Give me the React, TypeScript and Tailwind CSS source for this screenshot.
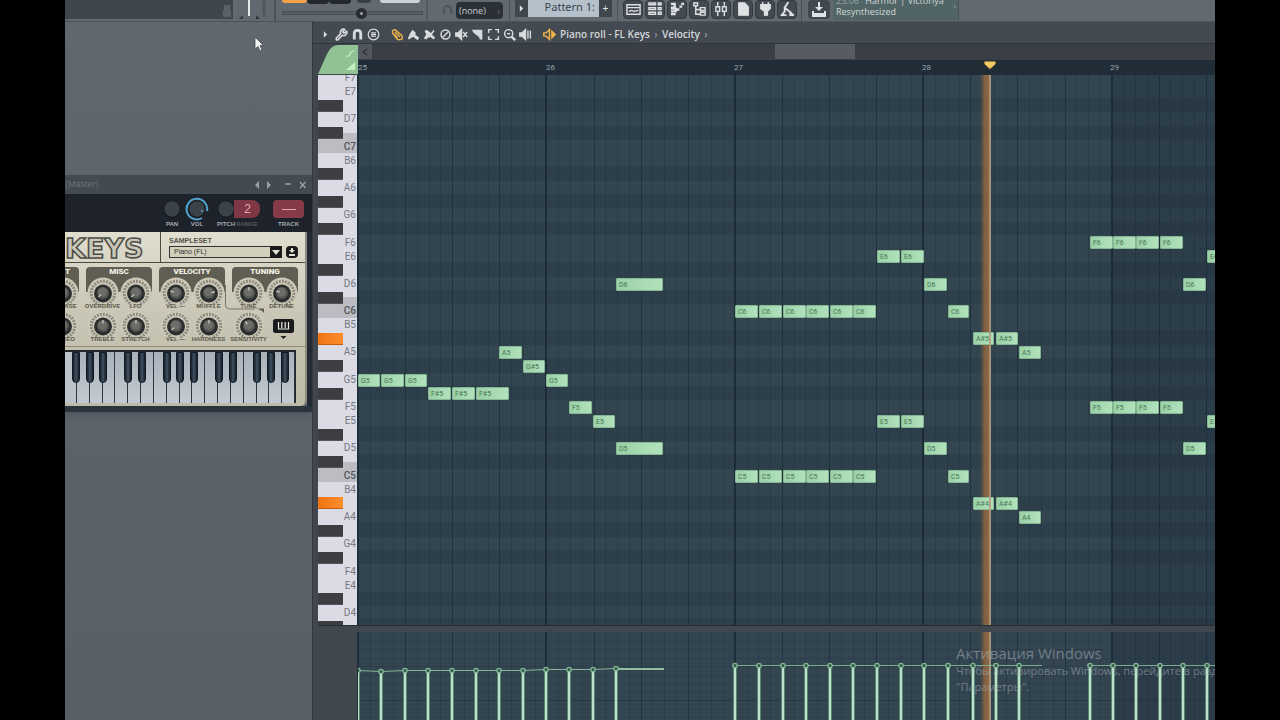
import React from "react";
import { Wrench } from "lucide-react";

const NAMES = ["C", "C#", "D", "D#", "E", "F", "F#", "G", "G#", "A", "A#", "B"];
const TOP_KEY = 7 * 12 + 5;
const ROWS = Array.from({ length: 41 }, (_, i) => {
  const n = TOP_KEY - i;
  return { name: NAMES[n % 12] + Math.floor(n / 12), black: NAMES[n % 12].length > 1, c: n % 12 === 0 };
});
const HELD = ["A#5", "A#4"];
const BAR = 188.4;
const ROW = 562 / 41;
const BARS = [25, 26, 27, 28, 29];

type Note = [string, number, number];
const NOTES: Note[] = [
  ["G5", 0, 23], ["G5", 23, 24], ["G5", 47, 23],
  ["F#5", 70, 24], ["F#5", 94, 24], ["F#5", 118, 34],
  ["A5", 141, 24], ["G#5", 165, 23], ["G5", 188, 23], ["F5", 211, 24], ["E5", 235, 23],
  ["D6", 258, 48], ["D5", 258, 48],
  ...["C6", "C5"].flatMap((n) => [377, 401, 425, 448, 472, 495].map((x): Note => [n, x, 24])),
  ...["E6", "E5"].flatMap((n) => [519, 543].map((x): Note => [n, x, 24])),
  ["D6", 566, 24], ["D5", 566, 24], ["C6", 590, 22], ["C5", 590, 22],
  ["A#5", 615, 22], ["A#5", 638, 23], ["A5", 661, 23],
  ["A#4", 615, 22], ["A#4", 638, 23], ["A4", 661, 23],
  ...["F6", "F5"].flatMap((n) => [732, 755, 778, 802].map((x): Note => [n, x, 24])),
  ["D6", 825, 24], ["D5", 825, 24], ["E6", 849, 24], ["E5", 849, 24],
];
const VELOCITY: [number, number][] = [
  [0, 39], [23, 40], [47, 39], [70, 39], [94, 39], [118, 39], [141, 39], [165, 39], [188, 38], [211, 38], [235, 38], [258, 37],
  ...[377, 401, 425, 448, 472, 495, 519, 543, 566, 590, 615, 638, 661, 732, 755, 778, 802, 825, 849].map((x): [number, number] => [x, 34]),
];

function GridLines() {
  return (
    <svg className="absolute inset-0 h-full w-full" shapeRendering="crispEdges" aria-hidden="true">
      {Array.from({ length: 120 }, (_, i) => {
        const x = Math.round((i * BAR) / 16);
        if (i % 16 === 0) return <rect key={i} x={x - 1} width="2" height="100%" fill="#172630" opacity=".75" />;
        if (i % 4 === 0) return <rect key={i} x={x} width="1" height="100%" fill="#1d2e39" opacity=".8" />;
        return <rect key={i} x={x} width="1" height="100%" fill="#22333e" opacity=".5" />;
      })}
      <rect x={Math.round(BAR * 4)} width="100%" height="100%" fill="#14202c" opacity=".2" />
    </svg>
  );
}

function PlayGlow() {
  return <div className="absolute inset-y-0 left-[622px] w-[9px] bg-linear-to-r from-[#a36c3c]/0 via-[#95663d]/80 to-[#8a6848]" />;
}

function PlayLine() {
  return <div className="absolute inset-y-0 left-[631px] w-[2px] bg-[#b59b7c]/90" />;
}

function Knob({ angle = 0 }: { angle?: number }) {
  return (
    <svg viewBox="0 0 32 32" className="h-8 w-8 shrink-0" aria-hidden="true">
      <circle cx="16" cy="16" r="15.5" fill="#cbc8b7" />
      <circle cx="16" cy="16" r="11.800" fill="none" stroke="#8b897c" strokeWidth="3" strokeDasharray="1.500 1" pathLength="60" />
      <path d="M16 16 10 31h12z" fill="#c6c3b1" />
      <circle cx="16" cy="16.5" r="9" fill="#2b2e2f" />
      <circle cx="16" cy="16" r="6" fill="#565754" />
      <circle cx="15.500" cy="15" r="4.5" fill="#6c6c68" />
      <path d="M16 13.500V10" stroke="#d0cfc6" strokeWidth="1.200" transform={`rotate(${angle} 16 16)`} />
    </svg>
  );
}

function KnobGroup({ title, titleClass, top, bottom, angles, last }: { title: string; titleClass: string; top: string[]; bottom: string[]; angles: number[]; last?: boolean }) {
  const label = "h-[5px] whitespace-nowrap text-[6px] leading-[5px] font-bold text-[#5a574b]";
  return (
    <div className="relative w-[66px] shrink-0">
      <div className={`h-[25px] rounded-t-sm bg-[#605e52] pt-px font-['Roboto'] text-[8px] leading-[8px] font-black text-[#f1efe2] ${titleClass}`}>{title}</div>
      <div className="-mt-[15px] grid grid-cols-2">
        {top.map((t, i) => (
          <div key={t} className="flex w-[33px] flex-col items-center">
            <Knob angle={angles[i]} />
            <span className={`${label} relative -mt-[5px]`}>{t}</span>
          </div>
        ))}
      </div>
      <div className="mt-px grid grid-cols-2">
        {bottom.map((t, i) => (
          <div key={t} className="flex w-[33px] flex-col items-center">
            <Knob angle={angles[i + 2]} />
            <span className={`${label} relative -mt-[5px]`}>{t}</span>
          </div>
        ))}
        {last && (
          <button aria-label="Keyboard options" className="flex flex-col items-center pt-[9px] pl-1">
            <svg viewBox="0 0 21 21" className="h-[21px] w-[21px]">
              <rect x="0" y="0" width="21" height="14" rx="2.5" fill="#191b1c" />
              <path d="M5.5 3v7h10V3M8.8 3v6M12.2 3v6" fill="none" stroke="#ecebe2" strokeWidth="1.2" />
              <path d="M7.500 17h6l-3 3z" fill="#22231f" />
            </svg>
          </button>
        )}
      </div>
    </div>
  );
}

function MiniDial({ ring }: { ring?: boolean }) {
  return (
    <svg viewBox="0 0 24 24" className="h-6 w-6" aria-hidden="true">
      {ring && <path d="M17 21A10.300 10.300 0 1 1 22 14" fill="none" stroke="#4fa5cf" strokeWidth="2" />}
      <circle cx="12" cy="12.500" r="8.500" fill="#14181c" />
      <circle cx="12" cy="12" r="7.800" fill="#3b4248" />
      {ring && <circle cx="17" cy="14" r="1" fill="#4fa5cf" />}
    </svg>
  );
}

const BLACK_KEYS = [7, 21, 34, 59, 73, 98, 111, 125, 150, 164, 188, 202, 216];

function Plugin() {
  const cap = "text-[6px] leading-[6px] font-bold text-[#a6aab0]";
  return (
    <section className="mt-[153px] w-[247px] border-b-[6px] border-[#2b333d] shadow-md" aria-label="FL Keys">
      <header className="flex h-[19px] items-center bg-[#444a51] pr-[6px] text-[9px] text-[#6c7278]">
        <span>(Master)</span>
        <svg viewBox="0 0 56 12" className="ml-auto h-3 w-14" fill="none" stroke="#9ba0a5" strokeWidth="1.3" aria-hidden="true">
          <path d="M9 2v8L5 6zM17 2v8l4-4z" fill="#9ba0a5" stroke="none" />
          <path d="M35 5h6M50 3l5.500 6M55.500 3 50 9" />
        </svg>
      </header>
      <div className="flex h-[38px] items-start bg-[#1e222a] pt-[3px] pr-[8px] pl-[94px]">
        <div className="flex w-[26px] flex-col items-center"><MiniDial /><span className={cap}>PAN</span></div>
        <div className="flex w-6 flex-col items-center"><MiniDial ring /><span className={cap}>VOL</span></div>
        <div className="ml-[5px] flex w-6 flex-col items-center"><MiniDial /><span className={cap}>PITCH</span></div>
        <div className="-ml-1 flex w-[26px] flex-col items-center">
          <span className="my-[3px] h-[18px] w-full rounded-r-lg bg-[#7d3745] pl-px text-center text-[12px] leading-[18px] text-[#e3a6ab]">2</span>
          <span className="text-[6px] leading-[6px] font-bold text-[#555a62]">RANGE</span>
        </div>
        <div className="ml-auto flex w-[31px] flex-col items-center">
          <span className="my-[3px] flex h-[18px] w-full items-center justify-center rounded-sm bg-[#873a48]"><span className="h-px w-[14px] bg-[#e0a9ad]" /></span>
          <span className={cap}>TRACK</span>
        </div>
      </div>
      <div className="border-r-[5px] border-[#252b34]">
        <div className="rounded-br-md border-r-2 border-[#8f8e82] bg-linear-to-b from-[#e0dece] via-[#c8c5b4] to-[#bdbaa6]">
          <div className="flex h-[31px] border-b border-[#4c4b42]">
            <div className="w-[96px] overflow-hidden border-r border-[#4c4b42]">
              <h2 className="font-['DejaVu_Sans'] text-[27px] leading-[33px] font-bold text-[#c9c7b8] [-webkit-text-stroke:1.500px_#4d4c47]">KEYS</h2>
            </div>
            <div className="flex-1 pt-1 pl-2">
              <label htmlFor="sampleset" className="block text-[7px] leading-[10px] font-bold text-[#55534a]">SAMPLESET</label>
              <div className="flex gap-1">
                <div className="relative w-[113px]">
                  <select id="sampleset" className="block h-[12px] w-full appearance-none border border-[#333] bg-[#d2d0bd] pl-1 text-[7px] leading-[10px] text-[#333]">
                    <option>Piano (FL)</option>
                  </select>
                  <span className="pointer-events-none absolute inset-y-0 right-0 flex w-3 items-center justify-center bg-[#191a19]">
                    <svg viewBox="0 0 8 5" className="h-[5px] w-2" fill="#e4e2d5" aria-hidden="true"><path d="M0 0h8L4 5z" /></svg>
                  </span>
                </div>
                <button aria-label="Preset info" className="flex h-[12px] w-3 items-center justify-center rounded-sm bg-[#191a19]">
                  <svg viewBox="0 0 8 8" className="h-2 w-2" fill="#e4e2d5"><path d="M3 0h2v2h2L4 5 1 2h2zM1 6h6v2H1z" /></svg>
                </button>
              </div>
            </div>
          </div>
          <div className="relative flex h-[84px] gap-[7px] border-b border-[#8c8a7c] pt-1">
            <div className="flex w-[14px] shrink-0 justify-end overflow-hidden">
              <KnobGroup title="T" titleClass="pr-[9px] text-right" top={["ATTACK", "RELEASE"]} bottom={["PAN", "STEREO"]} angles={[0, 0, 0, 0]} />
            </div>
            <KnobGroup title="MISC" titleClass="text-center" top={["OVERDRIVE", "LFO"]} bottom={["TREBLE", "STRETCH"]} angles={[-130, -130, 0, 0]} />
            <KnobGroup title="VELOCITY" titleClass="text-center" top={["VEL —", "MUFFLE"]} bottom={["VEL —", "HARDNESS"]} angles={[-70, 80, -130, 0]} />
            <KnobGroup title="TUNING" titleClass="text-center" top={["TUNE", "DETUNE"]} bottom={["SENSITIVITY"]} angles={[0, -70, -40]} last />
            <svg className="absolute top-[22px] left-[160px] h-7 w-10" viewBox="0 0 40 28" aria-hidden="true">
              <path d="M.500 0v20q0 4 4 4H30" fill="none" stroke="#77756a" />
              <path d="M30 23.500h9V28q-3-4-9-4.500z" fill="#605e52" />
            </svg>
          </div>
          <div className="pt-[3px] pr-[9px] pb-[3px]">
            <div className="relative flex h-[53px] overflow-hidden border-t-2 border-r border-[#22262a] bg-[#bcc3cb]">
              <div className="w-3 border-r border-[#30363c]" />
              {Array.from({ length: 17 }, (_, i) => (
                <div key={i} className="flex-1 border-r border-[#30363c] bg-linear-to-b from-[#a8b0ba] to-[#c3cad1]" />
              ))}
              {BLACK_KEYS.map((x) => (
                <div key={x} className="absolute top-0 h-[31px] w-[8px] rounded-b-sm border border-[#111a22] bg-linear-to-r from-[#151e27] via-[#435363] to-[#151e27]" style={{ left: x }} />
              ))}
            </div>
          </div>
        </div>
      </div>
    </section>
  );
}

const ICON_BTN = "flex h-[19px] w-5 shrink-0 items-center justify-center rounded-sm border border-[#343a41] bg-[#434a52]";
const WINDOW_ICONS: [string, React.ReactNode][] = [
  ["Playlist", <path d="M1 3h14v10H1zM1 6h14M3 10l3-1 2 1 5-1" />],
  ["Channel rack", <path d="M1 1h7v2H1zM1 6h7v2H1zM1 11h7v2H1zM11 1h3v2h-3zM11 6h3v2h-3zM11 11h3v2h-3z" />],
  ["Piano roll", <path d="M1 2h4v4H1M1 7h5v3H1M1 13h5M7 8h3M10 5h3M12 2h3" strokeWidth="2.500" />],
  ["Browser", <path d="M2 1h4v3H2zM4 4v9h5M4 8h5M9 6h5v3H9zM9 11h5v3H9z" />],
  ["Mixer", <path d="M4 0v4M4 10v5M11 0v4M11 10v5M2 5h4v5H2zM9 5h4v5H9z" />],
  ["Project", <path d="M3 1h6l4 4v9H3z" fill="#dfe2e4" />],
  ["Plugins", <path d="M3 3h10v4l-3 3v4H7v-4L3 7zM5 0v3M11 0v3" fill="#dfe2e4" />],
  ["Tools", <path d="m9 0-4 6 6 5 3 3M5 6v4l-3 4h5M11 11v3h4" strokeWidth="2" />],
];

function TopBar() {
  return (
    <header className="relative z-10 flex h-[22px] shrink-0 overflow-hidden border-b border-[#4d535a] bg-[#626970]">
      <div className="flex h-[19px] w-[168px] shrink-0 justify-end bg-[#40464d] pr-px">
        <svg viewBox="0 0 10 19" className="h-[19px] w-[10px]" aria-hidden="true"><path d="M2 5h6v5h1v7H1v-7h1z" fill="#5b6168" /></svg>
      </div>
      <svg viewBox="0 0 41 22" className="h-[22px] w-[41px] shrink-0" aria-hidden="true">
        <path d="M16 0v16" stroke="#e6e8ea" strokeWidth="2" />
        <path d="m10 15v4H6zM23 15v4h4z" fill="#30353a" />
        <path d="M31 0v17" stroke="#50565d" strokeWidth="3" />
      </svg>
      <div className="relative w-[154px] shrink-0 border-r-2 border-l-2 border-r-[#545b62] border-l-[#4b5158] pl-[6px]">
        <div className="flex items-start">
          <div className="h-[3px] w-[25px] rounded-b-lg bg-[#f5a14c]" />
          <div className="h-[4px] w-[22px] rounded-b-sm bg-[#24282d]" />
          <div className="h-[4px] w-[22px] rounded-b-md bg-[#24282d]" />
          <div className="ml-[6px] h-[3px] w-[14px] rounded-b-lg bg-[#393e44]" />
          <div className="ml-[9px] h-[3px] w-[40px] rounded-b-sm bg-[#cbd2d8]" />
        </div>
        <input type="range" defaultValue={57} aria-label="Song position" className="mt-[7px] block h-1 w-[141px] appearance-none border border-[#4b5158] bg-[#565d64] [&::-webkit-slider-thumb]:h-[11px] [&::-webkit-slider-thumb]:w-[11px] [&::-webkit-slider-thumb]:appearance-none [&::-webkit-slider-thumb]:rounded-full [&::-webkit-slider-thumb]:border-4 [&::-webkit-slider-thumb]:border-[#2a2e33] [&::-webkit-slider-thumb]:bg-[#a3a7aa]" />
      </div>
      <div className="flex w-[82px] shrink-0 items-start border-r border-[#4b5158] pt-[2px] pl-[14px]">
        <svg viewBox="0 0 14 17" className="h-[17px] w-[14px]" fill="none" stroke="#50565d" strokeWidth="2" aria-hidden="true"><path d="M2 12V8q0-4 3.500-4T9 8v4" /></svg>
        <button className="flex h-[17px] w-[47px] items-center justify-between rounded-sm bg-[#2b3036] px-[3px] font-['Open_Sans'] text-[9px] text-[#c8ccd0]">(none)<span className="text-[#6f757b]">›</span></button>
      </div>
      <div className="flex h-[17px] w-[107px] shrink-0 items-stretch pl-[5px]">
        <button aria-label="Pattern menu" className="flex w-[13px] items-center justify-center bg-[#3f464e]"><svg viewBox="0 0 6 8" className="h-[7px] w-[5px]" fill="#dfe2e4"><path d="M1 0v8l4-4z" /></svg></button>
        <button className="w-[71px] bg-[#b4c1ca] pr-1 pb-1 text-right font-['Noto_Sans'] text-[11px] leading-[13px] whitespace-nowrap text-[#36434d]">Pattern 1:</button>
        <button aria-label="Add pattern" className="flex w-[13px] items-center justify-center bg-[#3f464e] text-[10px] leading-[12px] text-[#dfe2e4]">+</button>
      </div>
      <nav className="flex w-[185px] shrink-0 gap-[2px] border-r border-l border-[#4b5158] pl-[5px]" aria-label="Windows">
        {WINDOW_ICONS.map(([name, d]) => (
          <button key={name} aria-label={name} className={ICON_BTN}>
            <svg viewBox="0 0 16 16" className="h-[15px] w-[15px]" fill="none" stroke="#dfe2e4" strokeWidth="1.500">{d}</svg>
          </button>
        ))}
      </nav>
      <div className="flex h-[20px] items-start pl-[6px]">
        <button aria-label="Download" className="flex h-[19px] w-[22px] items-center justify-center rounded-sm bg-[#40494f]">
          <svg viewBox="0 0 16 16" className="h-4 w-4" fill="none" stroke="#dfe2e4" strokeWidth="2"><path d="M8 0v7" /><path d="M4 5h8L8 9z" fill="#dfe2e4" stroke="none" /><path d="M2 9v5h12V9" /><path d="M3 12h10" /></svg>
        </button>
        <div className="ml-[3px] flex h-[20px] w-[126px] items-start justify-between overflow-hidden border-r border-[#4b5158] bg-[#526566] pl-[3px] font-['Open_Sans'] text-[9px] leading-[11px] whitespace-nowrap text-[#cfd8d8]">
          <p className="-mt-[5px]"><span className="mr-1 text-[#93a3a4]">23.06</span> Harmor | Victoriya<br />Resynthesized</p>
          <span className="pr-[2px] text-[#98a5a6]">›</span>
        </div>
      </div>
    </header>
  );
}

const TOOLS: [string, React.ReactNode, string][] = [
  ["Draw", <path d="M2 6q-1-4 3-4l8 7q2 3 0 5-3 1-5 0L2 6zM5 5l6 6M3 7l5 5" />, "text-[#eeb24a]"],
  ["Paint", <path d="M1 13 4 6l3-4 4 4-1 2 5 4-2 3-5-4-3 1-2 2z" fill="currentColor" stroke="none" />, "text-[#d8dbde]"],
  ["Paint drums", <path d="M1 13 4 8 2 4l2-2 3 2 3 2 3-4 1 2-3 4 1 1 3 3-2 2-4-3-3 1-2 2z" fill="currentColor" stroke="none" />, "text-[#d8dbde]"],
  ["Delete", <><circle cx="8" cy="8" r="5.500" /><path d="m4 12 8-8" /></>, "text-[#d8dbde]"],
  ["Mute", <><path d="M1 6h3l4-4v12l-4-4H1z" fill="currentColor" /><path d="m10 5 5 6M15 5l-5 6" /></>, "text-[#d8dbde]"],
  ["Slice", <path d="M1 2h13v12h-3q-1-4-4-5Q3 7 1 2z" fill="currentColor" stroke="none" />, "text-[#d8dbde]"],
  ["Select", <path d="M2 6V2h4M10 2h4v4M14 10v4h-4M6 14H2v-4" />, "text-[#d8dbde]"],
  ["Zoom", <><circle cx="7" cy="7" r="5" /><path d="M5 7h4" /><path d="m10.500 10.500 4.500 4.500" strokeWidth="3" /></>, "text-[#d8dbde]"],
  ["Playback", <><path d="M1 6h3l4-4v12l-4-4H1z" fill="currentColor" /><path d="M11 3v10M14 3v10" /></>, "text-[#d8dbde]"],
];

function RollToolbar() {
  const svg = "h-[13px] w-[13px]";
  return (
    <div className="flex h-[22px] items-center border-b border-[#2f353b] bg-[#434a51] pt-[3px] pl-[4px] font-['Open_Sans'] text-[10px] font-semibold text-[#d3d7db]">
      <button aria-label="Menu" className="flex w-4 justify-center"><svg viewBox="0 0 6 8" className="h-[7px] w-[5px]" fill="#d8dbde"><path d="M1 0v8l4-4z" /></svg></button>
      <button aria-label="Tools" className="flex w-4 justify-center text-[#d8dbde]"><Wrench size={13} strokeWidth={3} /></button>
      <button aria-label="Snap" className="flex w-4 justify-center"><svg viewBox="0 0 16 16" className={svg} fill="none" stroke="#d8dbde" strokeWidth="3.500"><path d="M4 14V7q0-4 4-4t4 4v7" /></svg></button>
      <button aria-label="Stamp" className="flex w-4 justify-center"><svg viewBox="0 0 16 16" className={svg} fill="none" stroke="#d8dbde" strokeWidth="1.500"><circle cx="8" cy="8" r="6.500" /><path d="M5 6h6M5 8h6M5 10h6" /></svg></button>
      <div className="ml-[8px] flex">
        {TOOLS.map(([name, d, color]) => (
          <button key={name} aria-label={name} className={`flex w-4 justify-center ${color}`}>
            <svg viewBox="0 0 16 16" className={svg} fill="none" stroke="currentColor" strokeWidth="1.800">{d}</svg>
          </button>
        ))}
      </div>
      <svg viewBox="0 0 16 16" className="ml-[10px] h-[13px] w-[13px]" fill="none" stroke="#eeb24a" strokeWidth="1.800" aria-hidden="true"><path d="M1 6h3l4-4v12l-4-4H1z" /><path d="M11 4v8l4-4z" fill="#eeb24a" /></svg>
      <h1 className="ml-[4px] flex items-center whitespace-pre">Piano roll - FL Keys<span className="w-3 text-center text-[#92989e]">›</span>Velocity<span className="w-3 text-center text-[#92989e]">›</span></h1>
    </div>
  );
}

function Keys() {
  return (
    <div className="w-10 shrink-0 overflow-hidden border-r border-[#20303a]">
      <div className="-mt-[4px] grid h-[562px] grid-rows-[repeat(41,minmax(0,1fr))] bg-[#dbdbe5]">
        {ROWS.map((r, i) => {
          const nextC = ROWS[i + 1]?.c;
          return (
            <div key={r.name} className={`flex items-center pt-px ${r.c ? "bg-[#bcbcc3]" : nextC ? "bg-linear-to-b from-[#dbdbe5] from-50% to-[#bcbcc3] to-50%" : ""}`}>
              {r.black ? (
                <div className={`h-[12px] w-[25px] border-b ${HELD.includes(r.name) ? "border-[#c65d10] bg-linear-to-r from-[#ef7411] to-[#ff8d2e]" : "border-[#55555b] bg-[#3d3d42]"}`} />
              ) : (
                <span className={`ml-auto pr-px font-['Roboto'] text-[10px] leading-[12px] ${r.c ? "font-medium text-[#55555b]" : "text-[#77777f]"}`}>{r.name}</span>
              )}
            </div>
          );
        })}
      </div>
    </div>
  );
}

function NoteGrid() {
  return (
    <div className="relative flex-1 overflow-hidden">
      <div className="-mt-[4px] grid h-[562px] grid-rows-[repeat(41,minmax(0,1fr))]">
        {ROWS.map((r) => (
          <div key={r.name} className={r.black ? "bg-[#2d3f4b]" : "border-b border-[#2f424d] bg-[#334650]"} />
        ))}
      </div>
      <GridLines />
      <PlayGlow />
      {NOTES.map(([name, x, w]) => (
        <div
          key={name + x}
          className="absolute h-[13px] overflow-hidden rounded-[1px] border border-[#86b795] bg-linear-to-r from-[#9bd0a8] to-[#b2e2bd] pl-[2px] font-['Roboto'] text-[7px] leading-[12px] text-[#447653]"
          style={{ left: x, width: w - 1, top: Math.round(ROWS.findIndex((r) => r.name === name) * ROW - 4) + 1 }}
        >
          {name}
        </div>
      ))}
      <PlayLine />
    </div>
  );
}

function VelocityPane() {
  const line = (pts: [number, number][], end: number) => pts.map(([x, y]) => `${x},${y}`).join(" ") + ` ${end},${pts[pts.length - 1][1]}`;
  return (
    <div className="relative flex-1 overflow-hidden bg-[#334551]">
      <GridLines />
      <svg className="absolute inset-0 h-full w-full" shapeRendering="crispEdges" aria-hidden="true">
        {[9, 17, 26, 34, 43, 51, 60, 77, 85].map((y) => <rect key={y} y={y} width="100%" height="1" fill="#22333e" opacity=".3" />)}
        <rect y="68" width="100%" height="1" fill="#1d2e39" opacity=".6" />
      </svg>
      <PlayGlow />
      <PlayLine />
      <svg className="absolute inset-0 h-full w-full" aria-hidden="true">
        <polyline points={line(VELOCITY.slice(0, 12), 306)} transform="translate(0 -.500)" fill="none" stroke="#86b59a" />
        <path d="M258 37h48" stroke="#93bca3" strokeWidth="2" />
        <polyline points={line(VELOCITY.slice(12, 25), 684)} transform="translate(0 -.500)" fill="none" stroke="#7cab92" />
        <polyline points={line(VELOCITY.slice(25), 1300)} transform="translate(0 -.500)" fill="none" stroke="#7cab92" />
        {VELOCITY.map(([x, y]) => (
          <g key={x}>
            <path d={`M${x} ${y + 2}V400`} stroke="#56846d" strokeWidth="4" />
            <path d={`M${x} ${y + 2}V400`} stroke="#bde0cd" strokeWidth="2" />
            <circle cx={x} cy={y - 0.5} r="2.200" fill="#35594c" stroke="#83b894" strokeWidth="1.300" />
          </g>
        ))}
      </svg>
      <div className="absolute top-[11px] left-[598px] font-['Open_Sans'] text-[11px] leading-4 whitespace-nowrap text-[#b3b9bd]/50">
        <p className="text-[15px] leading-5">Активация Windows</p>
        <p>Чтобы активировать Windows, перейдите в раздел</p>
        <p>"Параметры".</p>
      </div>
    </div>
  );
}

function PianoRoll() {
  return (
    <section className="flex min-w-0 flex-1 flex-col border-l border-[#33393f] bg-[#41474e]" aria-label="Piano roll">
      <RollToolbar />
      <div className="flex flex-1 flex-col pl-[5px]">
        <div className="flex h-[31px] shrink-0">
          <svg viewBox="0 0 40 31" className="h-[31px] w-10 shrink-0" aria-hidden="true">
            <path d="M0 30C5 20 9 8 13 4q3-3 8-3h19v29z" fill="#90c296" />
            <path d="M28 12q3 1 4-2t4-3" fill="none" stroke="#bde8bd" strokeWidth="1.500" />
            <path d="M28 26h9v-8z" fill="#c1f0be" />
          </svg>
          <div className="flex min-w-0 flex-1 flex-col">
            <div className="flex h-4 items-start bg-[#393f45]">
              <button aria-label="Scroll left" className="flex h-[15px] w-[14px] items-center justify-center bg-[#51575d]"><svg viewBox="0 0 6 8" className="h-2 w-[6px]" fill="none" stroke="#2d3338" strokeWidth="1.300"><path d="M5 1 1 4l4 3" /></svg></button>
              <div className="ml-[47%] h-[15px] w-[80px] bg-[#565c62]" />
            </div>
            <div className="relative flex flex-1 overflow-hidden bg-[#202d37]">
              {BARS.map((b) => (
                <span key={b} className="w-[188px] shrink-0 font-['Roboto'] text-[8px] leading-[16px] text-[#99a3aa]">{b}</span>
              ))}
              <svg viewBox="0 0 14 10" className="absolute top-0 left-[625px] h-[10px] w-[14px]" aria-hidden="true"><path d="M1 1h12v3L7 9.500 1 4z" fill="#f2cb62" stroke="#39332a" /></svg>
            </div>
          </div>
        </div>
        <div className="flex h-[551px] shrink-0 border-b border-[#262c32]">
          <Keys />
          <NoteGrid />
        </div>
        <div className="flex min-h-0 flex-1 pt-[6px]">
          <div className="w-10 shrink-0 border-r border-[#20303a]" />
          <VelocityPane />
        </div>
      </div>
    </section>
  );
}

export default function App() {
  return (
    <div className="h-screen overflow-hidden bg-black px-[65px] font-['Liberation_Sans',sans-serif]">
      <div className="relative flex h-full flex-col overflow-hidden bg-[#5c636b]">
        <TopBar />
        <main className="flex min-h-0 flex-1">
          <aside className="w-[247px] shrink-0 bg-linear-to-b from-[#60676f] to-[#595f67]">
            <Plugin />
          </aside>
          <PianoRoll />
        </main>
        <svg viewBox="0 0 10 16" className="absolute top-[36px] left-[189px] h-4 w-[10px]" aria-hidden="true">
          <path d="M1 1v12l3-2.500L6 15l2-1-2-4.500h3.500z" fill="#f5f6f7" stroke="#454b52" strokeWidth=".800" />
        </svg>
      </div>
    </div>
  );
}
